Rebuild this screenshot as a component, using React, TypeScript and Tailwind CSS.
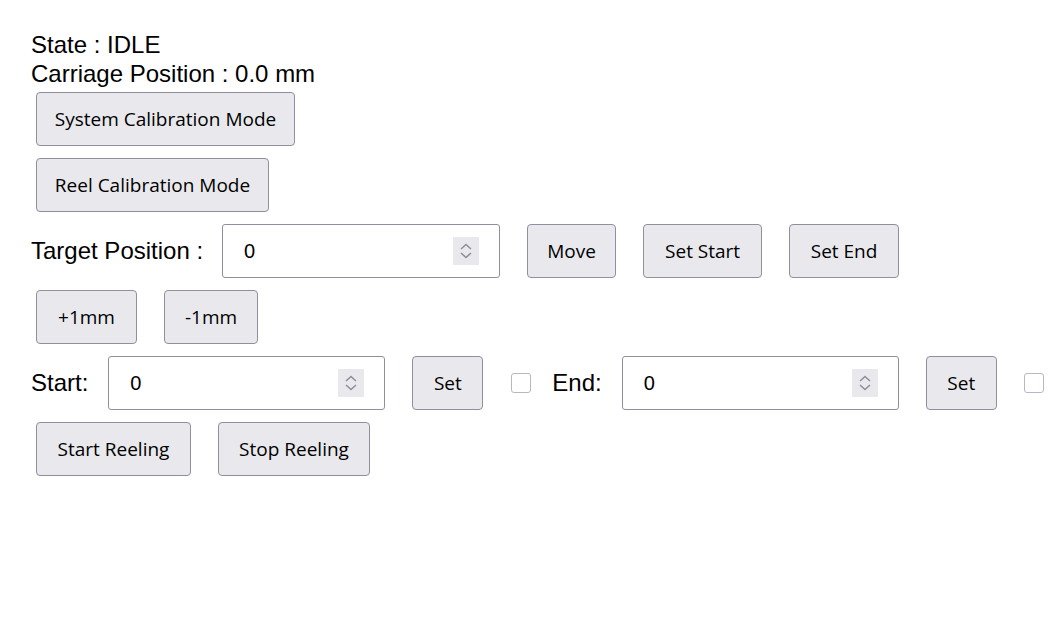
import type { ReactNode } from "react";

const label = "font-['Liberation_Sans',Arial,sans-serif] text-[24px] text-black";

function Btn({ children, className = "" }: { children: ReactNode; className?: string }) {
  return (
    <button
      type="button"
      className={`h-[54px] shrink-0 rounded-[4px] border border-[#8f8f9d] bg-[#e9e9ed] text-center font-['Open_Sans',sans-serif] text-[19px] text-black ${className}`}
    >
      {children}
    </button>
  );
}

function NumberBox({ width }: { width: string }) {
  return (
    <div className={`relative h-[54px] shrink-0 ${width}`}>
      <input
        type="text"
        defaultValue="0"
        className="h-full w-full rounded-[3px] border border-[#8f8f9d] bg-white pl-[21px] font-['Liberation_Sans',Arial,sans-serif] text-[20px] text-black outline-none"
      />
      <span className="absolute top-[13px] right-[21px] flex h-[28px] w-[26px] flex-col items-center justify-center gap-[2px] bg-[#e9e9ed]">
        <svg width="12" height="7" viewBox="0 0 12 7" fill="none" stroke="#8f8f9d" strokeWidth="1.6">
          <path d="M1 6 L6 1.5 L11 6" />
        </svg>
        <svg width="12" height="7" viewBox="0 0 12 7" fill="none" stroke="#8f8f9d" strokeWidth="1.6">
          <path d="M1 1 L6 5.5 L11 1" />
        </svg>
      </span>
    </div>
  );
}

function Check({ className = "" }: { className?: string }) {
  return (
    <span
      className={`block h-[20px] w-[20px] shrink-0 rounded-[3px] border border-[#b8b8c2] bg-white ${className}`}
    />
  );
}

export default function App() {
  return (
    <div className="min-h-screen bg-white pt-[30px] pl-[31px]">
      <div className={`${label} leading-[29px]`}>
        <div>State : IDLE</div>
        <div>Carriage Position : 0.0 mm</div>
      </div>

      <div className="mt-[4px] flex flex-col gap-[12px]">
        <div className="pl-[5px]">
          <Btn className="w-[259px]">System Calibration Mode</Btn>
        </div>
        <div className="pl-[5px]">
          <Btn className="w-[233px]">Reel Calibration Mode</Btn>
        </div>

        <div className="flex items-center">
          <span className={`${label} mr-[19px]`}>Target Position :</span>
          <NumberBox width="w-[278px]" />
          <Btn className="ml-[27px] w-[89px]">Move</Btn>
          <Btn className="ml-[27px] w-[119px]">Set Start</Btn>
          <Btn className="ml-[27px] w-[110px]">Set End</Btn>
        </div>

        <div className="flex items-center pl-[5px]">
          <Btn className="w-[101px]">+1mm</Btn>
          <Btn className="ml-[27px] w-[94px]">-1mm</Btn>
        </div>

        <div className="flex items-center">
          <span className={`${label} mr-[20px]`}>Start:</span>
          <NumberBox width="w-[277px]" />
          <Btn className="ml-[27px] w-[71px]">Set</Btn>
          <Check className="ml-[28px]" />
          <span className={`${label} mr-[20px] ml-[21px]`}>End:</span>
          <NumberBox width="w-[277px]" />
          <Btn className="ml-[27px] w-[71px]">Set</Btn>
          <Check className="ml-[27px]" />
        </div>

        <div className="flex items-center pl-[5px]">
          <Btn className="w-[155px]">Start Reeling</Btn>
          <Btn className="ml-[27px] w-[152px]">Stop Reeling</Btn>
        </div>
      </div>
    </div>
  );
}
